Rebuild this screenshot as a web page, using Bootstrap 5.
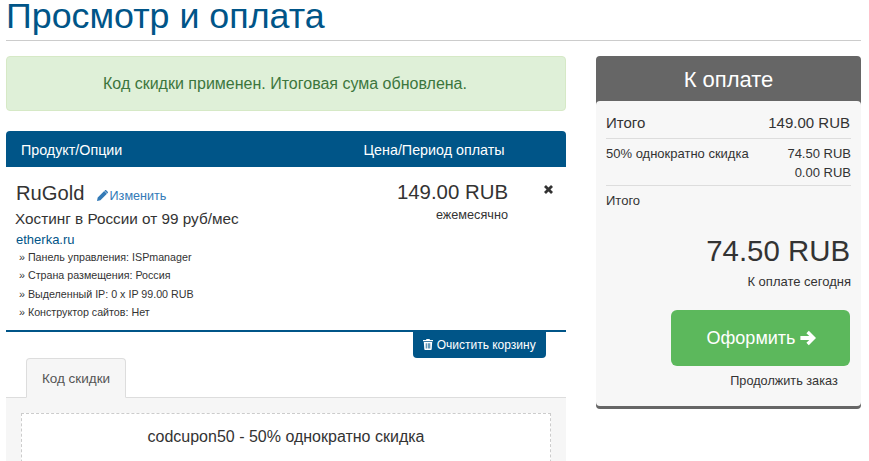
<!DOCTYPE html>
<html lang="ru">
<head>
    <meta charset="UTF-8">
    <meta name="viewport" content="width=device-width, initial-scale=1.0">
    <title>Просмотр и оплата</title>
    <link href="https://cdn.jsdelivr.net/npm/bootstrap@5.3.0/dist/css/bootstrap.min.css" rel="stylesheet">
    <style>
        html, body { height: 461px; overflow: hidden; }
        body { font-family: "Liberation Sans", Arial, sans-serif; font-size: 14px; color: #333; background: #fff; }
        .page-wrap { padding: 0 8px 0 6px; }
        .page-title { height: 41px; margin: 0; border-bottom: 1px solid #ccc; color: #005588; font-size: 35.8px; line-height: 32px; font-weight: 400; }
        .main-col { width: 560px; flex: none; }
        .side-col { width: 265px; flex: none; margin-left: 30px; }
        .done-alert { height: 55px; margin: 15px 0 20px; padding-right: 2px; background: #dff0d8; border: 1px solid #d6e9c6; border-radius: 4px; color: #3c763d; font-size: 16px; line-height: 53px; text-align: center; }
        .cart-head { height: 36px; padding: 0 15px; background: #005588; border-radius: 4px 4px 0 0; color: #fff; font-size: 14.3px; line-height: 38px; }
        .head-price { width: 158px; margin-right: 38px; text-align: center; }
        .cart-item { height: 165px; padding: 13px 9px 0 10px; border-bottom: 2px solid #005588; }
        .item-name { font-size: 20.2px; line-height: 26px; }
        .item-edit { margin-left: 7px; color: #337ab7; font-size: 12.6px; text-decoration: none; }
        .item-edit svg { width: 11px; height: 11px; vertical-align: -1px; margin-right: -2px; }
        .item-tag { margin-left: -1px; font-size: 15.3px; line-height: 20px; margin-top: 0; }
        .item-domain { color: #005588; font-size: 13px; line-height: 16px; margin-top: 3px; }
        .item-opt { padding-left: 3px; font-size: 10.7px; line-height: 18.4px; margin: 0; list-style: none; }
        .item-price { width: 130px; margin-left: auto; text-align: right; margin-right: 36px; margin-top: -1px; }
        .price-big { font-size: 20.4px; line-height: 26px; }
        .price-sub { font-size: 12.7px; line-height: 17px; margin-top: 2px; }
        .item-remove { width: 13px; margin-right: 0; }
        .item-remove svg { width: 9px; height: 9px; display: block; margin-top: 5px; }
        .clear-btn { display: block; width: 133px; height: 26px; margin: 0 20px 0 auto; padding: 0; background: #005588; border: 0; border-radius: 0 0 4px 4px; color: #fff; font-size: 12px; line-height: 26px; }
        .clear-btn svg { width: 10px; height: 11px; vertical-align: -1px; }
        .promo-tab { width: 100px; height: 40px; margin-left: 20px; margin-bottom: -1px; position: relative; background: #f6f6f6; border: 1px solid #ddd; border-bottom-color: #f6f6f6; border-radius: 4px 4px 0 0; color: #555; font-size: 13.5px; line-height: 39px; text-align: center; }
        .promo-body { height: 80px; padding: 15px 15px 0; background: #f6f6f6; border-top: 1px solid #ddd; }
        .promo-box { height: 60px; background: #fff; border: 1px dashed #ccc; font-size: 16px; line-height: 46px; text-align: center; }
        .sum-panel { margin-top: 15px; padding-bottom: 3px; background: #666; border-radius: 4px; height: 353px; }
        .sum-head { height: 45px; color: #fff; font-size: 22px; line-height: 47px; text-align: center; }
        .sum-body { height: 305px; padding: 0 10px; background: #f7f7f7; border-radius: 4px; }
        .sum-line { border-bottom: 1px solid #ddd; }
        .sum-sub { height: 38px; font-size: 15px; line-height: 44px; }
        .sum-sub span:last-child { margin-right: 1px; }
        .sum-disc { height: 47px; padding-top: 6px; font-size: 13px; line-height: 18.5px; }
        .sum-label { font-size: 13px; line-height: 16px; margin-top: 7px; }
        .sum-total { font-size: 29.4px; line-height: 34px; text-align: right; margin: 25px 1px 0 0; }
        .sum-note { font-size: 13px; line-height: 18px; text-align: right; margin-top: 5px; }
        .pay-btn { display: block; width: 179px; height: 56px; margin: 19px 1px 0 auto; padding: 0 0 0 2px; background: #5cb85c; border: 0; border-radius: 6px; color: #fff; font-size: 18px; line-height: 56px; }
        .pay-btn svg { width: 16px; height: 16px; vertical-align: -2px; }
        .more-link { display: block; font-size: 12.7px; line-height: 18px; text-align: center; color: #333; text-decoration: none; margin: 6px 0 0 111px; }
    </style>
</head>
<body>
    <div class="page-wrap">
        <h1 class="page-title">Просмотр и оплата</h1>
        <div class="d-flex">
            <div class="main-col">
                <div class="done-alert">Код скидки применен. Итоговая сума обновлена.</div>

                <div class="cart-head d-flex justify-content-between">
                    <div>Продукт/Опции</div>
                    <div class="head-price">Цена/Период оплаты</div>
                </div>
                <div class="cart-item d-flex">
                    <div>
                        <div class="item-name">RuGold <a href="#" class="item-edit"><svg viewBox="0 0 16 16"><path fill="#337ab7" d="M0 16l1-5L10.500 1.500l4 4L5 15zM11.600.4c.5-.5 1.300-.5 1.800 0l2.200 2.200c.5.5.5 1.300 0 1.800l-.6.6-4-4z"/></svg> Изменить</a></div>
                        <div class="item-tag">Хостинг в России от 99 руб/мес</div>
                        <div class="item-domain">etherka.ru</div>
                        <ul class="item-opt">
                            <li>» Панель управления: ISPmanager</li>
                            <li>» Страна размещения: Россия</li>
                            <li>» Выделенный IP: 0 x IP 99.00 RUB</li>
                            <li>» Конструктор сайтов: Нет</li>
                        </ul>
                    </div>
                    <div class="item-price">
                        <div class="price-big">149.00 RUB</div>
                        <div class="price-sub">ежемесячно</div>
                    </div>
                    <div class="item-remove"><svg viewBox="0 0 10 10"><path fill="#333" d="M2.200 0L5 2.800 7.800 0 10 2.200 7.200 5 10 7.800 7.800 10 5 7.200 2.200 10 0 7.800 2.800 5 0 2.200z"/></svg></div>
                </div>
                <button type="button" class="clear-btn"><svg viewBox="0 0 10 11"><path fill="#fff" d="M3.500 0h3l.5 1h3v1.200H0V1h3zM.8 3h8.400l-.5 7.200c0 .5-.4.8-.8.8H2.100c-.4 0-.8-.3-.8-.8zM2.800 4.200v5.300h.8V4.200zm2 0v5.300h.8V4.200zm1.600 0v5.300h.8V4.200z"/></svg> Очистить корзину</button>

                <div class="promo-tab">Код скидки</div>
                <div class="promo-body">
                    <div class="promo-box">codcupon50 - 50% однократно скидка</div>
                </div>
            </div>

            <div class="side-col">
                <div class="sum-panel">
                    <div class="sum-head">К оплате</div>
                    <div class="sum-body">
                        <div class="sum-sub sum-line d-flex justify-content-between"><span>Итого</span><span>149.00 RUB</span></div>
                        <div class="sum-disc sum-line d-flex justify-content-between">
                            <span>50% однократно скидка</span>
                            <span class="text-end">74.50 RUB<br>0.00 RUB</span>
                        </div>
                        <div class="sum-label">Итого</div>
                        <div class="sum-total">74.50 RUB</div>
                        <div class="sum-note">К оплате сегодня</div>
                        <button type="button" class="pay-btn">Оформить <svg viewBox="0 0 16 16"><path fill="#fff" d="M8.800.8L16 8l-7.200 7.200-2.400-2.400 2.900-2.900H.4V6.100h8.900L6.400 3.200z"/></svg></button>
                        <a href="#" class="more-link">Продолжить заказ</a>
                    </div>
                </div>
            </div>
        </div>
    </div>
    <script src="https://cdn.jsdelivr.net/npm/bootstrap@5.3.0/dist/js/bootstrap.bundle.min.js"></script>
</body>
</html>
